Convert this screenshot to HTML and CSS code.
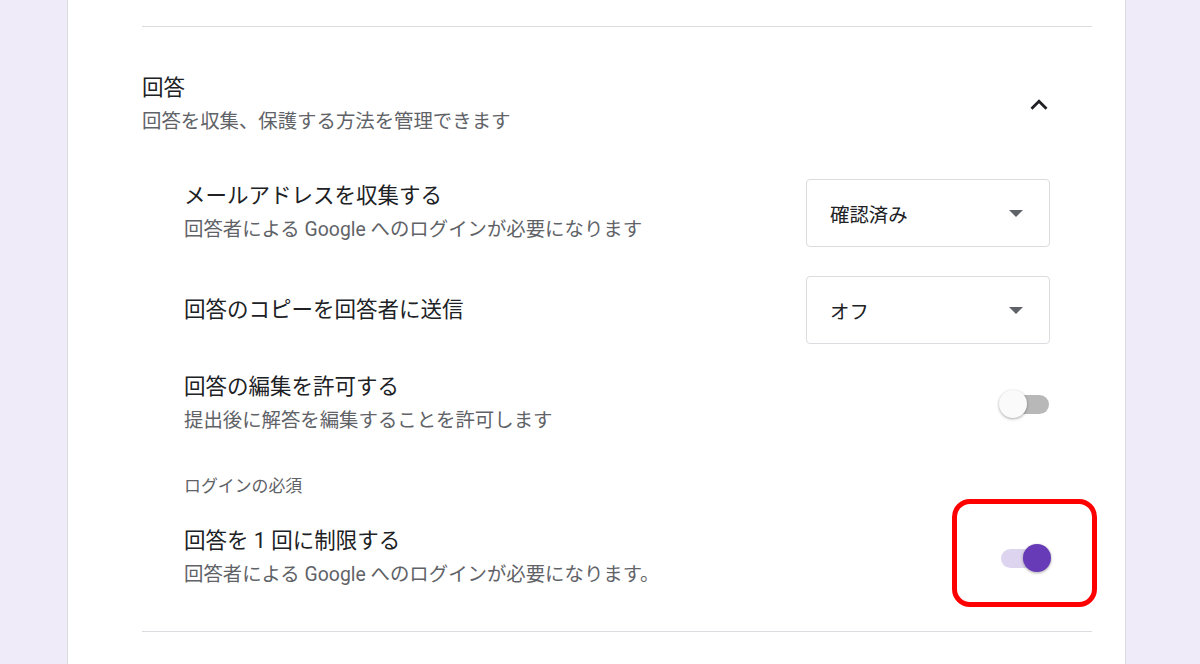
FILE: index.html
```html
<!DOCTYPE html>
<html lang="ja">
<head>
<meta charset="utf-8">
<title>回答</title>
<link rel="stylesheet" href="styles.css">
</head>
<body>
<div class="card">
  <div class="top-space"></div>
  <section class="section">
    <div class="section-head">
      <div class="head-text">
        <div class="head-title">回答</div>
        <div class="head-sub">回答を収集、保護する方法を管理できます</div>
      </div>
      <div class="chevron">
        <svg viewBox="0 0 24 24" width="34" height="34"><path d="M12 8l-6 6 1.41 1.41L12 10.83l4.59 4.58L18 14z" fill="#202124"/></svg>
      </div>
    </div>
    <div class="rows">
      <div class="row row-1">
        <div class="row-text">
          <div class="row-title">メールアドレスを収集する</div>
          <div class="row-sub">回答者による Google へのログインが必要になります</div>
        </div>
        <div class="select">
          <span class="select-text">確認済み</span>
          <span class="caret"></span>
        </div>
      </div>
      <div class="row row-2">
        <div class="row-text">
          <div class="row-title">回答のコピーを回答者に送信</div>
        </div>
        <div class="select">
          <span class="select-text">オフ</span>
          <span class="caret"></span>
        </div>
      </div>
      <div class="row row-3">
        <div class="row-text">
          <div class="row-title">回答の編集を許可する</div>
          <div class="row-sub">提出後に解答を編集することを許可します</div>
        </div>
        <div class="toggle">
          <span class="track"></span>
          <span class="thumb"></span>
        </div>
      </div>
      <div class="group-label">ログインの必須</div>
      <div class="row row-4">
        <div class="row-text">
          <div class="row-title">回答を 1 回に制限する</div>
          <div class="row-sub">回答者による Google へのログインが必要になります。</div>
        </div>
        <div class="toggle on">
          <span class="track"></span>
          <span class="thumb"></span>
          <span class="highlight"></span>
        </div>
      </div>
    </div>
  </section>
  <div class="bottom-line"></div>
</div>
</body>
</html>
```
FILE: styles.css
```css
html, body {
  margin: 0;
  padding: 0;
}
body {
  background: #f0ebf8;
  font-family: Roboto, "Noto Sans CJK JP", sans-serif;
  color: #202124;
  width: 1200px;
  height: 664px;
  overflow: hidden;
}
.card {
  margin-left: 67px;
  width: 1059px;
  height: 664px;
  box-sizing: border-box;
  background: #fff;
  border-left: 1px solid #dadce0;
  border-right: 1px solid #dadce0;
  padding: 0 33px 0 74px;
}
.top-space {
  height: 26px;
  border-bottom: 1px solid #dadce0;
}
.section {
  padding-top: 44px;
}
.section-head {
  display: flex;
  align-items: center;
  justify-content: space-between;
}
.head-title {
  font-size: 21.5px;
  line-height: 34px;
  color: #202124;
}
.head-sub {
  font-size: 19.4px;
  line-height: 34px;
  color: #5f6368;
}
.chevron {
  width: 48px;
  height: 48px;
  display: flex;
  align-items: center;
  justify-content: center;
  margin-right: 29px;
}
.chevron svg {
  display: block;
}
.rows {
  padding: 0 42px;
  display: flex;
  flex-direction: column;
}
.row {
  display: flex;
  align-items: center;
  justify-content: space-between;
}
.row-1 { margin-top: 40px; }
.row-2 { margin-top: 29px; }
.row-3 { margin-top: 26px; }
.row-4 { margin-top: 26px; }
.row-title {
  font-size: 21.5px;
  line-height: 34px;
  color: #202124;
}
.row-sub {
  font-size: 19.4px;
  line-height: 34px;
  color: #5f6368;
}
.select {
  width: 244px;
  height: 68px;
  box-sizing: border-box;
  border: 1px solid #dadce0;
  border-radius: 4px;
  display: flex;
  align-items: center;
  justify-content: space-between;
  padding: 0 26px 0 23px;
}
.select-text {
  font-size: 19.4px;
  color: #202124;
}
.caret {
  width: 0;
  height: 0;
  border-left: 7px solid transparent;
  border-right: 7px solid transparent;
  border-top: 7px solid #5f6368;
}
.group-label {
  margin-top: 36px;
  font-size: 16.9px;
  line-height: 24px;
  color: #5f6368;
}
.toggle {
  position: relative;
  width: 52px;
  height: 28px;
  margin-right: -1px;
}
.track {
  position: absolute;
  left: 2px;
  top: 4.5px;
  width: 48px;
  height: 19px;
  border-radius: 10px;
  background: #b8b8b8;
}
.thumb {
  position: absolute;
  left: 0;
  top: 0;
  width: 28px;
  height: 28px;
  border-radius: 50%;
  background: #fafafa;
  box-shadow: 0 1px 3px rgba(0,0,0,0.35);
}
.toggle.on .track {
  background: #ddd5ef;
}
.toggle.on .thumb {
  left: 24px;
  background: #673ab7;
}
.highlight {
  position: absolute;
  left: -47px;
  top: -45px;
  width: 145px;
  height: 108px;
  box-sizing: border-box;
  border: 5px solid #ff0000;
  border-radius: 18px;
}
.bottom-line {
  margin-top: 39px;
  border-top: 1px solid #dadce0;
}
```
